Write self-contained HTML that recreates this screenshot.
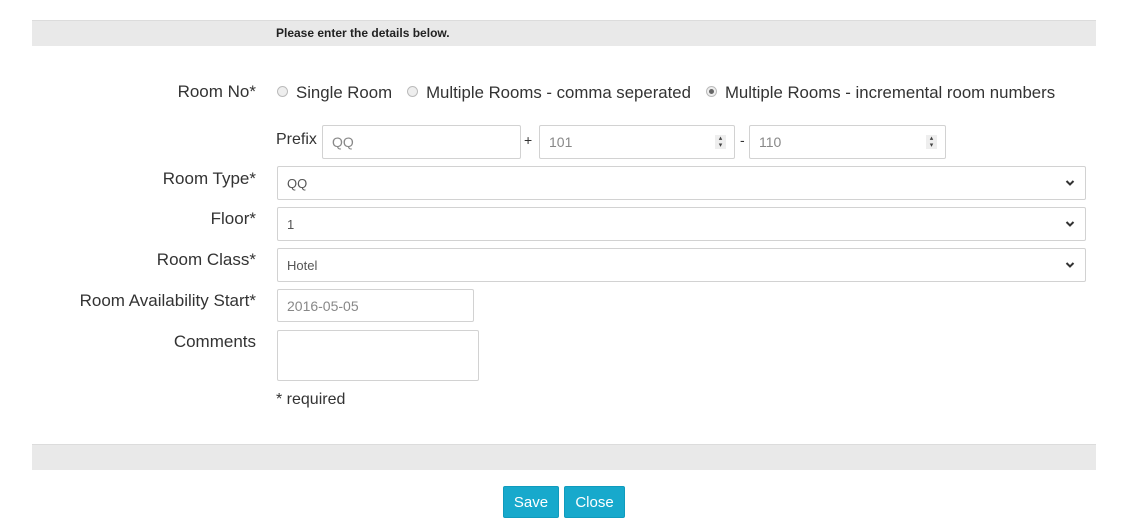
<!DOCTYPE html>
<html><head><meta charset="utf-8"><style>
*{box-sizing:border-box;margin:0;padding:0}
body{width:1122px;height:522px;background:#fff;font-family:"Liberation Sans",sans-serif;color:#333;position:relative;overflow:hidden}
.a{position:absolute}
.bar{position:absolute;left:32px;width:1064px;height:26px;background:#e9e9e9;border-top:1px solid #dcdcdc}
.lbl{position:absolute;right:866px;font-size:17px;color:#333;white-space:nowrap}
.in{position:absolute;border:1px solid #d2d2d2;border-radius:2px;background:#fff;font-size:13px;color:#555;padding-left:9px;display:flex;align-items:center}
.ph{color:#888;font-size:14px}
.sp{position:absolute;right:8px;top:9px;width:11px;height:14px;background:#eee;font-size:7px;line-height:7px;text-align:center;color:#444}
.chev{position:absolute;right:10px;top:12px}
.rad{display:inline-block;width:11px;height:11px;border-radius:50%;border:1px solid #bbb;background:#eee;vertical-align:middle;margin-right:8px;position:relative;top:-2px}
.rad.on:after{content:"";position:absolute;left:2px;top:2px;width:5px;height:5px;border-radius:50%;background:#666}
.t{font-size:16px;color:#333;white-space:nowrap}
.btn{position:absolute;top:486px;height:32px;background:#17a9cc;color:#fff;font-size:15px;border-radius:2px;display:flex;align-items:center;justify-content:center;border:1px solid #109bbd}
</style></head><body>
<div class="bar" style="top:20px"></div>
<div class="a" style="left:276px;top:26px;font-size:12px;font-weight:bold;color:#222">Please enter the details below.</div>

<div class="lbl" style="top:82px">Room No*</div>
<div class="a t" style="left:277px;top:83px;font-size:16.8px"><span class="rad"></span>Single Room<span style="display:inline-block;width:15px"></span><span class="rad"></span>Multiple Rooms - comma seperated<span style="display:inline-block;width:15px"></span><span class="rad on"></span>Multiple Rooms - incremental room numbers</div>

<div class="a t" style="left:276px;top:131px">Prefix</div>
<div class="in" style="left:322px;top:125px;width:199px;height:34px"><span class="ph">QQ</span></div>
<div class="a t" style="left:524px;top:132px;font-size:14px">+</div>
<div class="in" style="left:539px;top:125px;width:196px;height:34px"><span class="ph">101</span><div class="sp">▴<br>▾</div></div>
<div class="a t" style="left:740px;top:132px;font-size:14px">-</div>
<div class="in" style="left:749px;top:125px;width:197px;height:34px"><span class="ph">110</span><div class="sp">▴<br>▾</div></div>

<div class="lbl" style="top:169px">Room Type*</div>
<div class="in" style="left:277px;top:166px;width:809px;height:34px">QQ<svg class="chev" width="10" height="8" viewBox="0 0 10 8"><path d="M1.5 2l3.5 3.5 3.5-3.5" stroke="#333" stroke-width="2" fill="none"/></svg></div>
<div class="lbl" style="top:209px">Floor*</div>
<div class="in" style="left:277px;top:207px;width:809px;height:34px">1<svg class="chev" width="10" height="8" viewBox="0 0 10 8"><path d="M1.5 2l3.5 3.5 3.5-3.5" stroke="#333" stroke-width="2" fill="none"/></svg></div>
<div class="lbl" style="top:250px">Room Class*</div>
<div class="in" style="left:277px;top:248px;width:809px;height:34px">Hotel<svg class="chev" width="10" height="8" viewBox="0 0 10 8"><path d="M1.5 2l3.5 3.5 3.5-3.5" stroke="#333" stroke-width="2" fill="none"/></svg></div>
<div class="lbl" style="top:291px">Room Availability Start*</div>
<div class="in" style="left:277px;top:289px;width:197px;height:33px"><span class="ph">2016-05-05</span></div>
<div class="lbl" style="top:332px">Comments</div>
<div class="in" style="left:277px;top:330px;width:202px;height:51px"></div>
<div class="a t" style="left:276px;top:391px">* required</div>

<div class="bar" style="top:444px"></div>
<div class="btn" style="left:503px;width:56px">Save</div>
<div class="btn" style="left:564px;width:61px">Close</div>
</body></html>
